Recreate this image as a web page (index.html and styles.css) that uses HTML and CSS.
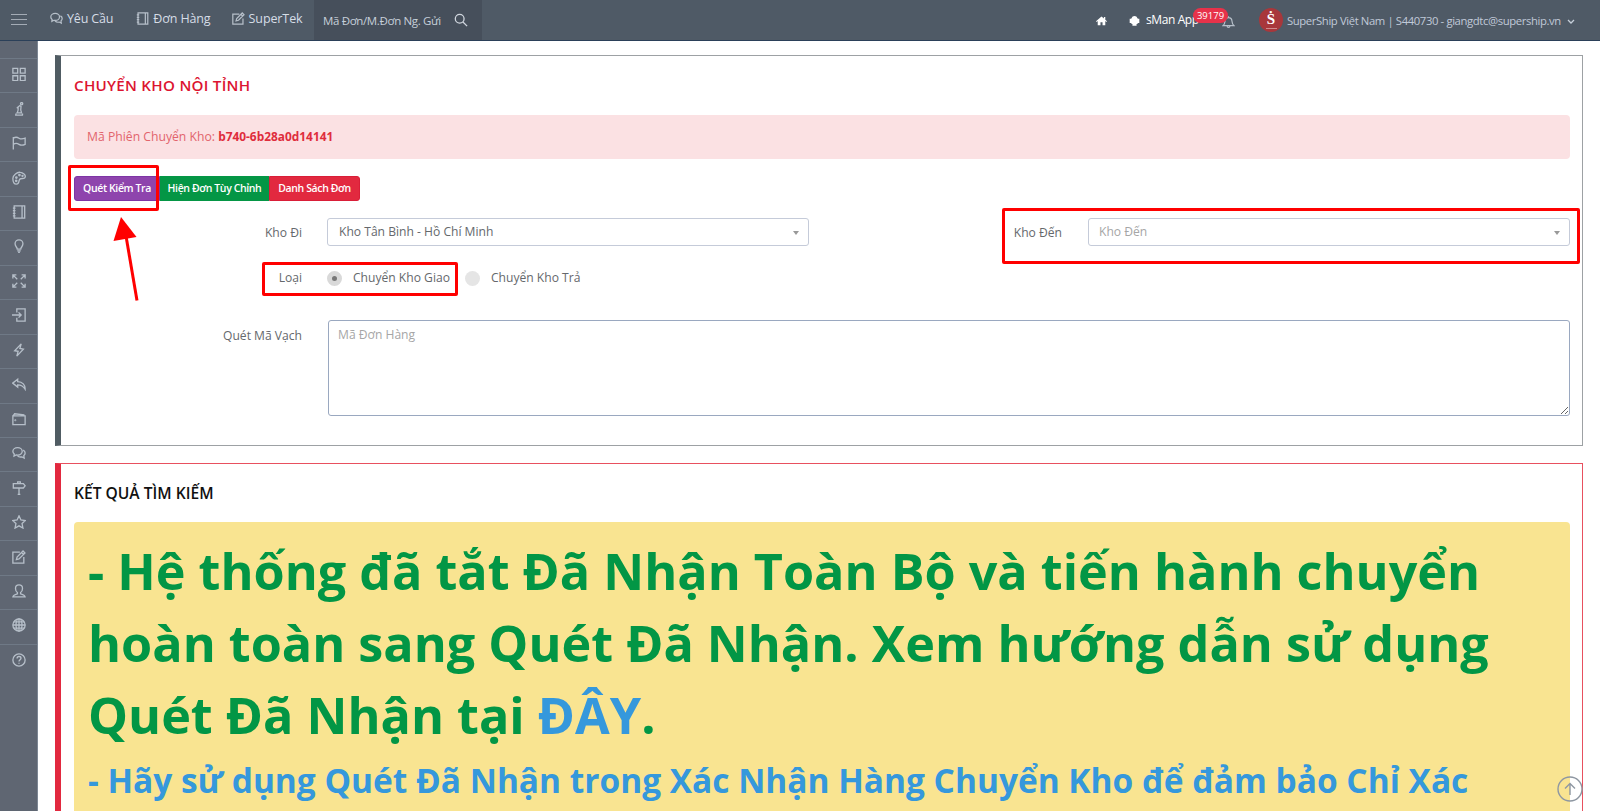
FILE: index.html
```
<!DOCTYPE html>
<html lang="vi">
<head>
    <meta charset="UTF-8">
    <meta name="viewport" content="width=device-width, initial-scale=1.0">
    <title>Chuyển Kho Nội Tỉnh</title>
    <link rel="stylesheet" href="styles.css">
</head>
<body>
    <svg class="sprite">
        <symbol id="i-bubbles" viewBox="0 0 16 16"><path d="M6.4 1.800c3 0 5.300 1.900 5.300 4.300s-2.300 4.300-5.300 4.300c-.6 0-1.100-.1-1.600-.2L2.300 11.500l.3-2.300C1.600 8.400 1 7.300 1 6.100c0-2.400 2.400-4.300 5.400-4.300z"/><path d="M12.800 4.800c1.400.7 2.200 1.900 2.200 3.300 0 1.200-.6 2.200-1.500 2.900l.4 2.800-2.500-1.400c-2.100.5-4.100-.1-5.200-1.500"/></symbol>
        <symbol id="i-notebook" viewBox="0 0 16 16"><path d="M2.500 1h12v14h-12zM11.500 1v14M1 3.500h3M1 6.500h3M1 9.500h3M1 12.500h3"/></symbol>
        <symbol id="i-note" viewBox="0 0 16 16"><path d="M9 2.500H1v12.500h12.500V8M5 11l.8-3L12.600 1.200l2.200 2.200L8 10.200zM11 3l2 2"/></symbol>
        <symbol id="i-search" viewBox="0 0 16 16"><circle cx="6.500" cy="6.500" r="5"/><path d="M10.200 10.200L15 15"/></symbol>
        <symbol id="i-grid" viewBox="0 0 16 16"><path d="M1 1.500h5.500V7H1zM9.500 1.500H15V7H9.500zM1 10h5.500v5.500H1zM9.500 10H15v5.500H9.500z"/></symbol>
        <symbol id="i-chess" viewBox="0 0 16 16"><circle cx="11" cy="2" r="1.300"/><path d="M3.500 15h9M5 12.500h6.500M6 12.500c1-2 1.300-4 1-6L5.500 6.800 9 4l1.300 1.200c-.5 2-.3 5 .7 7.300M4.500 13v2M12 13v2"/></symbol>
        <symbol id="i-flag" viewBox="0 0 16 16"><path d="M1.500 1v14.500M1.500 2.500C4 .8 6 1.200 8 2.500s4.500 1 7 0v7c-2.500 1.200-5 1.200-7 0s-4-1.500-6.500 0"/></symbol>
        <symbol id="i-palette" viewBox="0 0 16 16"><path d="M9.500 1.500C6 1 1 4.500 1 8.500c0 3.500 1.500 6.500 4 6.500s3-2.500 3.200-4.200C8.500 9 10 8.600 12 8.600c2 0 3.400-1 3.200-2.800C15 4 12.500 1.800 9.500 1.500z"/><circle cx="5" cy="7.500" r=".8"/><circle cx="8.500" cy="4.700" r=".8"/><circle cx="12" cy="5.500" r=".6"/><circle cx="4.800" cy="11.200" r=".8"/></symbol>
        <symbol id="i-bulb" viewBox="0 0 16 16"><path d="M6 11.500C6 9.500 3.500 8.500 3.500 5.500 3.500 3 5.500 1 8 1s4.500 2 4.500 4.500c0 3-2.500 4-2.500 6zM6 13.500h4M7 15.300h2"/></symbol>
        <symbol id="i-expand" viewBox="0 0 16 16"><path d="M1 5V1h4M11 1h4v4M15 11v4h-4M5 15H1v-4M1 1l5 5M15 1l-5 5M15 15l-5-5M1 15l5-5"/></symbol>
        <symbol id="i-login" viewBox="0 0 16 16"><path d="M5.500 5V1H15v14H5.500v-4M0 8h10.500M7.500 5l3 3-3 3"/></symbol>
        <symbol id="i-bolt" viewBox="0 0 16 16"><path d="M10.500 1L3 8.800l4 .7L5.500 15 13 7 9 6.300z"/></symbol>
        <symbol id="i-reply" viewBox="0 0 16 16"><path d="M6.500 2.500L.8 7l5.700 4.500V9c4 0 6.500 1.500 8.500 5 .3-5-3-8.500-8.500-8.800z"/></symbol>
        <symbol id="i-wallet" viewBox="0 0 16 16"><path d="M1 4.500h14v10H1zM1.200 4.500L3 2l10.500 1.200v1.300"/><circle cx="3.800" cy="9.500" r=".4"/></symbol>
        <symbol id="i-sign" viewBox="0 0 16 16"><path d="M1.500 3H13l2 2.500L13 8H1.500zM8 8v7.500M6.500 3V1h3v2M6.500 15.300h3"/></symbol>
        <symbol id="i-star" viewBox="0 0 16 16"><path d="M8 1l2.200 4.700 5 .6-3.700 3.500 1 5.100L8 12.400l-4.500 2.500 1-5.100L.8 6.300l5-.6z"/></symbol>
        <symbol id="i-user" viewBox="0 0 16 16"><path d="M6.200 9.800C4.800 8.800 4 7 4 5c0-2.500 1.700-4 4-4s4 1.500 4 4c0 2-.8 3.800-2.200 4.800v1.400c2.500.8 5 1.200 5.200 3.600H1c.2-2.400 2.700-2.800 5.200-3.600z"/></symbol>
        <symbol id="i-globe" viewBox="0 0 16 16"><circle cx="8" cy="8" r="7"/><ellipse cx="8" cy="8" rx="3.400" ry="7"/><path d="M8 1v14M1 8h14M2 4.500h12M2 11.500h12"/></symbol>
        <symbol id="i-question" viewBox="0 0 16 16"><circle cx="8" cy="8" r="7"/><path d="M5.800 6.300C5.800 4.800 6.800 4 8 4s2.300.8 2.300 2.100C10.300 7.600 8 7.800 8 9.600M8 11v1.400"/></symbol>
        <symbol id="i-bell" viewBox="0 0 16 16"><path d="M1.200 12.500c2-1.500 2.300-3 2.500-5.500C3.900 4.200 5.500 2.500 8 2.500S12.100 4.200 12.300 7c.2 2.500.5 4 2.500 5.500zM8 2.500V1M6.300 12.800c0 2.500 3.400 2.500 3.400 0"/></symbol>
        <symbol id="i-home" viewBox="0 0 16 16"><path d="M8 2L0 9l1 1 1.500-1.200V15h4v-4.500h3V15h4V8.800L15 10l1-1-2.500-2.200V3h-2v2z"/></symbol>
        <symbol id="i-android" viewBox="0 0 16 16"><path d="M4 4.500C4.300 2.500 6 1.500 8 1.500s3.700 1 4 3h.5v1H15v6h-2.500V13H11v2.500H5V13H3.500v-1.500H1v-6h2.500v-1z"/></symbol>
    </svg>

    <header class="navbar">
        <div class="toggler"><span></span><span></span><span></span></div>
        <nav class="nav-left">
            <a class="nav-item"><svg class="icon"><use href="#i-bubbles"/></svg><span>Yêu Cầu</span></a>
            <a class="nav-item nav-order"><svg class="icon"><use href="#i-notebook"/></svg><span>Đơn Hàng</span></a>
            <a class="nav-item nav-tek"><svg class="icon"><use href="#i-note"/></svg><span>SuperTek</span></a>
        </nav>
        <div class="search">
            <span class="search-text">Mã Đơn/M.Đơn Ng. Gửi</span>
            <svg class="icon"><use href="#i-search"/></svg>
        </div>
        <div class="nav-right">
            <svg class="icon solid home"><use href="#i-home"/></svg>
            <svg class="icon solid android"><use href="#i-android"/></svg>
            <span class="app">sMan App</span>
            <div class="notify">
                <svg class="icon"><use href="#i-bell"/></svg>
                <span class="badge">39179</span>
            </div>
            <div class="avatar"><span>Ṡ</span><small></small></div>
            <span class="username">SuperShip Việt Nam | S440730 - giangdtc@supership.vn</span>
            <svg class="chevron" viewBox="0 0 8 6"><path d="M1 1l3 3 3-3"/></svg>
        </div>
    </header>

    <div class="page">
        <aside class="sidebar">
            <a><svg class="icon"><use href="#i-grid"/></svg></a>
            <a><svg class="icon"><use href="#i-chess"/></svg></a>
            <a><svg class="icon"><use href="#i-flag"/></svg></a>
            <a><svg class="icon"><use href="#i-palette"/></svg></a>
            <a><svg class="icon"><use href="#i-notebook"/></svg></a>
            <a><svg class="icon"><use href="#i-bulb"/></svg></a>
            <a><svg class="icon"><use href="#i-expand"/></svg></a>
            <a><svg class="icon"><use href="#i-login"/></svg></a>
            <a><svg class="icon"><use href="#i-bolt"/></svg></a>
            <a><svg class="icon"><use href="#i-reply"/></svg></a>
            <a><svg class="icon"><use href="#i-wallet"/></svg></a>
            <a><svg class="icon"><use href="#i-bubbles"/></svg></a>
            <a><svg class="icon"><use href="#i-sign"/></svg></a>
            <a><svg class="icon"><use href="#i-star"/></svg></a>
            <a><svg class="icon"><use href="#i-note"/></svg></a>
            <a><svg class="icon"><use href="#i-user"/></svg></a>
            <a><svg class="icon"><use href="#i-globe"/></svg></a>
            <a><svg class="icon"><use href="#i-question"/></svg></a>
        </aside>

        <main class="content">
            <section class="card">
                <h1 class="title red">CHUYỂN KHO NỘI TỈNH</h1>
                <div class="alert danger">Mã Phiên Chuyển Kho: <b>b740-6b28a0d14141</b></div>
                <div class="buttons">
                    <button class="btn purple">Quét Kiểm Tra</button>
                    <button class="btn green">Hiện Đơn Tùy Chỉnh</button>
                    <button class="btn crimson">Danh Sách Đơn</button>
                </div>
                <div class="row">
                    <label class="label">Kho Đi</label>
                    <div class="select">Kho Tân Bình - Hồ Chí Minh</div>
                    <label class="label">Kho Đến</label>
                    <div class="select empty">Kho Đến</div>
                </div>
                <div class="row radios">
                    <label class="label">Loại</label>
                    <div class="radio-list">
                        <label class="radio checked"><i></i><span>Chuyển Kho Giao</span></label>
                        <label class="radio"><i></i><span>Chuyển Kho Trả</span></label>
                    </div>
                </div>
                <div class="row scan">
                    <label class="label">Quét Mã Vạch</label>
                    <textarea class="barcode" placeholder="Mã Đơn Hàng"></textarea>
                </div>
            </section>

            <section class="card result">
                <h2 class="title">KẾT QUẢ TÌM KIẾM</h2>
                <div class="alert warning">
                    <p class="big">- Hệ thống đã tắt Đã Nhận Toàn Bộ và tiến hành chuyển<br>hoàn toàn sang Quét Đã Nhận. Xem hướng dẫn sử dụng<br>Quét Đã Nhận tại <a>ĐÂY</a>.</p>
                    <p class="medium">- Hãy sử dụng Quét Đã Nhận trong Xác Nhận Hàng Chuyển Kho để đảm bảo Chỉ Xác</p>
                </div>
            </section>
        </main>
    </div>

    <!-- khung hướng dẫn -->
    <div class="mark mark-check"></div>
    <div class="mark mark-type"></div>
    <div class="mark mark-target"></div>
    <svg class="arrow" viewBox="0 0 30 90"><path d="M24 84.500L13 20" stroke="red" stroke-width="3"/><path d="M8 1l15.500 20L.5 25z" fill="red"/></svg>
    <svg class="to-top" viewBox="0 0 26 26"><circle cx="13" cy="13" r="12"/><path d="M13 19V8M8 12.500L13 7.500l5 5"/></svg>
</body>
</html>
```

FILE: styles.css
```
*{
    box-sizing: border-box;
}
body{
    margin: 0;
    height: 811px;
    overflow: hidden;
    display: flex;
    flex-direction: column;
    background-color: #fff;
    color: #65686c;
    font-family: "Open Sans", "Noto Sans", sans-serif;
    font-size: 12.1px;
}
.sprite{
    display: none;
}
.icon{
    width: 14px;
    height: 14px;
    flex: none;
    fill: none;
    stroke: #b6bfc9;
    stroke-width: 1.5;
}
.icon.solid{
    fill: #fff;
    stroke: none;
}

/* thanh trên */
.navbar{
    height: 41px;
    flex: none;
    display: flex;
    background-color: #4f5a66;
    border-bottom: 1px solid #2b4059;
    color: #c6cfda;
    white-space: nowrap;
}
.toggler{
    width: 50px;
    padding: 14px 0 0 11px;
    display: flex;
    flex-direction: column;
    gap: 4px;
}
.toggler span{
    width: 16px;
    height: 1px;
    background-color: #a3abb5;
}
.nav-left{
    width: 264px;
    display: flex;
    align-items: center;
    padding-bottom: 4px;
    color: #d6dde6;
    font-size: 12.5px;
    letter-spacing: -.15px;
}
.nav-item{
    width: 87px;
    display: flex;
    align-items: center;
    gap: 3px;
}
.nav-item .icon{
    width: 13px;
    height: 13px;
    margin-right: 1px;
}
.nav-order{
    width: 95px;
    padding-left: 1px;
}
.nav-tek{
    padding-left: 3px;
    letter-spacing: -.1px;
}
.search{
    width: 168px;
    display: flex;
    align-items: center;
    padding-left: 9px;
    gap: 14px;
    background-color: #464f5b;
    font-size: 11.5px;
    letter-spacing: -.36px;
}
.search-text{
    width: 117px;
}
.search .icon{
    stroke: #d0d6de;
}
.nav-right{
    flex: 1;
    display: flex;
    align-items: center;
    padding-left: 614px;
}
.home{
    width: 11px;
    height: 11px;
}
.android{
    width: 11px;
    height: 11px;
    margin-left: 22px;
}
.app{
    width: 51px;
    margin-left: 6px;
    color: #fff;
    font-size: 12px;
    letter-spacing: -.4px;
}
.app, .username{
    line-height: 40px;
}
.notify{
    position: relative;
    display: flex;
    width: 13px;
    margin-left: 25px;
    padding-top: 4px;
}
.notify .icon{
    width: 13px;
}
.badge{
    position: absolute;
    left: -29px;
    top: -3px;
    width: 35px;
    height: 15px;
    border-radius: 8px;
    background-color: #e7324a;
    color: #fff;
    font-size: 9.5px;
    line-height: 15px;
    text-align: center;
}
.avatar{
    width: 24px;
    height: 24px;
    flex: none;
    margin-left: 24px;
    border-radius: 50%;
    background-color: #a8373b;
    color: #fff;
    font: bold 15px/23px "Liberation Serif", serif;
    display: flex;
    flex-direction: column;
    align-items: center;
}
.avatar small{
    width: 11px;
    height: 1px;
    margin-top: -3px;
    background-color: #cf8a8c;
}
.username{
    width: 275px;
    margin: 1px 0 0 4px;
    font-size: 11.3px;
    letter-spacing: -.39px;
    color: #c0c9d8;
}
.chevron{
    width: 8px;
    height: 6px;
    margin: 3px 0 0 5px;
    fill: none;
    stroke: #c6cfda;
    stroke-width: 1.3;
}

/* menu trái */
.page{
    flex: 1;
    min-height: 0;
    display: flex;
}
.sidebar{
    width: 38px;
    flex: none;
    padding-top: 17px;
    background-color: #5f6672;
    border-right: 1px solid #7d8794;
}
.sidebar a{
    height: 34.46px;
    display: flex;
    align-items: center;
    justify-content: center;
    padding-bottom: 3px;
    border-top: 1px solid #6f7986;
}
.content{
    flex: 1;
    padding: 14px 17px 0;
}
.card{
    height: 391px;
    padding: 0 12px 0 13px;
    border: 1px solid #9da1a4;
    border-left: 6px solid #505c63;
}
.title{
    height: 59px;
    margin: 0;
    line-height: 59px;
    font-size: 15.6px;
    font-weight: 600;
    color: #111;
}
.title.red{
    font-size: 15.2px;
    letter-spacing: .25px;
    color: #dc1431;
}
.alert{
    border-radius: 4px;
}
.danger{
    height: 44px;
    padding-left: 13px;
    line-height: 43px;
    background-color: #fbe1e3;
    color: #e2646c;
    font-size: 12.2px;
}
.danger b{
    font-size: 11.9px;
    color: #df2d3c;
}
.buttons{
    display: flex;
    margin: 17px 0;
}
.btn{
    height: 25px;
    padding: 0;
    border: 1px solid #d91e38;
    background-color: #e2293f;
    color: #fff;
    font-family: inherit;
    font-size: 10.5px;
    font-weight: 600;
    letter-spacing: -.38px;
    line-height: 23px;
    white-space: nowrap;
}
.purple{
    width: 86px;
    background-color: #8e44ad;
    border-color: #7d35a5;
    border-radius: 3px 0 0 3px;
}
.green{
    width: 109px;
    background-color: #049645;
    border-color: #049645;
}
.crimson{
    width: 91px;
    border-radius: 0 3px 3px 0;
}
.row{
    display: grid;
    grid-template-columns: 228px 25px 482px 253px 26px 482px;
    height: 28px;
    line-height: 28px;
}
.row .label{
    padding-top: 1px;
    text-align: right;
}
.select{
    grid-column: 3;
    position: relative;
    height: 28px;
    padding-left: 11px;
    border: 1px solid #c5cbd9;
    border-radius: 3px;
    line-height: 26px;
}
.select.empty{
    grid-column: 6;
    padding-left: 10px;
    color: #a6a6a6;
}
.select::after{
    content: "";
    position: absolute;
    right: 9px;
    top: 12px;
    border: 3.5px solid transparent;
    border-top: 4px solid #999;
    border-bottom: 0;
}
.radios{
    margin-top: 18px;
}
.radios .label{
    padding-top: 0;
}
.radio-list{
    grid-column: 3;
    display: flex;
    gap: 15px;
}
.radio{
    display: flex;
    align-items: center;
    gap: 11px;
    white-space: nowrap;
}
.radio i{
    width: 15px;
    height: 15px;
    border-radius: 50%;
    background-color: #e5e5e5;
}
.radio span{
    padding-bottom: 1px;
}
.checked i{
    border: 5px solid #d9d9d9;
    background-color: #777;
}
.checked span{
    width: 97px;
}
.scan{
    height: 98px;
    margin-top: 29px;
}
.barcode{
    grid-column: 3 / 7;
    height: 96px;
    margin: -1px 0 0 1px;
    padding: 5px 9px;
    border: 1px solid #9aa8c0;
    border-radius: 3px;
    font-family: inherit;
    font-size: inherit;
    line-height: 18px;
    outline: none;
}
.barcode::placeholder{
    color: #a6a6a6;
}

.result{
    height: 348px;
    margin-top: 17px;
    border-color: #e8505f;
    border-bottom: 0;
    border-left-color: #e2293f;
}
.result .title{
    height: 58px;
}
.warning{
    height: 289px;
    padding: 13px 0 0 14px;
    border-radius: 4px 4px 0 0;
    background-color: #f9e491;
    font-weight: 700;
    white-space: nowrap;
}
.warning p{
    margin: 0;
}
.big{
    font-size: 50.33px;
    line-height: 72.1px;
    color: #029645;
}
.big a, .medium{
    color: #3598dc;
}
.medium{
    font-size: 33.46px;
    line-height: 58px;
}

/* khung đỏ và mũi tên */
.mark{
    position: absolute;
    border: 3px solid red;
    border-radius: 2px;
}
.mark-check{
    left: 68px;
    top: 165px;
    width: 91px;
    height: 46px;
}
.mark-type{
    left: 262px;
    top: 262px;
    width: 196px;
    height: 34px;
}
.mark-target{
    left: 1002px;
    top: 208px;
    width: 578px;
    height: 56px;
}
.arrow{
    position: absolute;
    left: 113px;
    top: 216px;
    width: 30px;
    height: 90px;
}
.to-top{
    position: absolute;
    left: 1557px;
    top: 776px;
    width: 26px;
    height: 26px;
    fill: none;
    stroke: #8e97a2;
    stroke-width: 1.4;
}
```
